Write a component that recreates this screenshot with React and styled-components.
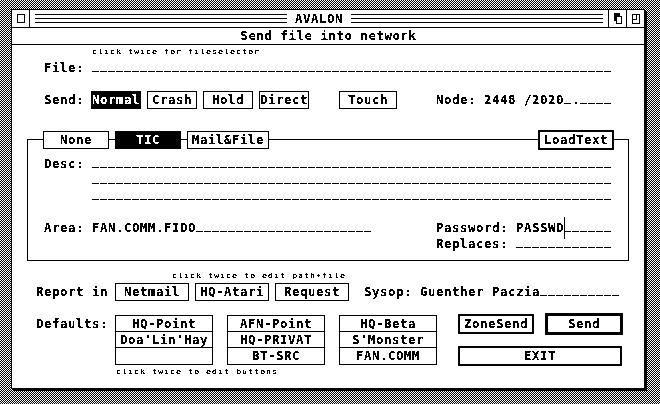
import React from "react";
import styled, { createGlobalStyle, css } from "styled-components";

const Global = createGlobalStyle`
  *, *::before, *::after { box-sizing: border-box; }
  html, body, #root { margin: 0; height: 100%; }
  body { overflow: hidden; }
`;

/* One text cell is 8 x 16 pixels. */
const cells = (n) => `${n * 8}px`;

const Desktop = styled.div`
  width: 660px;
  height: 404px;
  padding: 9px 0 0 11px;
  background: repeating-conic-gradient(#000 0 25%, #fff 0 50%) 0 0 / 2px 2px;
  color: #000;
  font: bold 12.4px/16px "DejaVu Sans Mono", monospace;
  letter-spacing: 0.535px;
  white-space: pre;
`;

const Window = styled.main`
  display: flex;
  flex-direction: column;
  width: 634px;
  height: 380px;
  background: #fff;
  border: 1px solid #000;
  box-shadow: 1px 1px 0 #000, 2px 2px 0 #000;
`;

const TitleBar = styled.header`
  display: flex;
  height: 18px;
  border-bottom: 1px solid #000;
`;

const Gadget = styled.button`
  display: flex;
  width: 18px;
  height: 17px;
  padding: 0;
  border: 0 solid #000;
  border-left-width: ${(p) => (p.$side === "right" ? "1px" : 0)};
  border-right-width: ${(p) => (p.$side === "left" ? "1px" : 0)};
  background: #fff;
  svg { display: block; width: 17px; height: 17px; flex: none; }
`;

const Stripes = styled.div`
  flex: none;
  width: 252px;
  height: 9px;
  margin: 4px ${(p) => (p.$end ? "5px" : "0")} 0 ${(p) => (p.$end ? "0" : "5px")};
  background: repeating-linear-gradient(#000 0 1px, #fff 1px 4px);
`;

const Crisp = css`
  filter: url(#onebit);
`;

const Text = styled.span`
  display: block;
  flex: none;
  height: 16px;
  width: ${(p) => (p.$w ? cells(p.$w) : "auto")};
  ${Crisp}
`;

const Title = styled.h1`
  flex: 1;
  margin: 1px 0 0;
  font: inherit;
  text-align: center;
  ${Crisp}
`;

const InfoLine = styled.div`
  display: flex;
  justify-content: center;
  height: 17px;
  padding-left: 1px;
  border-bottom: 1px solid #000;
`;

const Body = styled.div`
  display: flex;
  flex-direction: column;
  flex: 1;
`;

const Hint = styled.div`
  flex: none;
  align-self: flex-start;
  height: 14px;
  margin: ${(p) => p.$margin};
  font: normal 7px/14px "DejaVu Sans Mono", monospace;
  letter-spacing: 0.786px;
  transform: scaleX(1.2);
  transform-origin: 0 0;
  filter: url(#onebit-small);
`;

const Row = styled.div`
  display: flex;
  align-items: flex-start;
  height: 16px;
  margin: ${(p) => p.$margin || 0};
`;

const Blank = styled.span`
  display: block;
  flex: none;
  width: ${(p) => cells(p.$n)};
  height: 16px;
  background: repeating-linear-gradient(90deg, #000 0 7px, transparent 7px 8px) 0 11px / 100% 1px no-repeat;
`;

const Button = styled.button`
  display: flex;
  flex: none;
  align-items: center;
  justify-content: center;
  width: ${(p) => p.$w}px;
  height: ${(p) => 16 + 2 * (p.$b || 1)}px;
  margin: -${(p) => p.$b || 1}px ${(p) => p.$gap || 0}px 0 0;
  padding: 0;
  border: ${(p) => p.$b || 1}px solid #000;
  border-radius: 0;
  background: ${(p) => (p.$on ? "#000" : "#fff")};
  color: ${(p) => (p.$on ? "#fff" : "#000")};
  font: inherit;
  letter-spacing: inherit;
  white-space: pre;
`;

const Spacer = styled.span`
  flex: none;
  width: ${(p) => p.$w}px;
`;

const Group = styled.section`
  width: 602px;
  height: 122px;
  margin: 31px 0 0 15px;
  border: 1px solid #000;
`;

const Caret = styled.span`
  width: 1px;
  height: 22px;
  margin: -3px -1px 0 0;
  background: #000;
  z-index: 1;
`;

const Columns = styled.div`
  display: flex;
  height: 50px;
  margin: 15px 0 0 24px;
`;

const PresetList = styled.div`
  display: grid;
  flex: none;
  grid-template-rows: 16px 16px 16px;
  width: 98px;
  height: 50px;
  margin-right: 14px;
  border: 1px solid #000;
`;

const Preset = styled.button`
  display: flex;
  justify-content: center;
  padding: 0;
  border: 0 solid #000;
  border-bottom-width: 1px;
  background: transparent;
  color: #000;
  font: inherit;
  letter-spacing: inherit;
  &:last-child { border-bottom-width: 0; }
`;

const Actions = styled.div`
  display: flex;
  flex-wrap: wrap;
  align-content: flex-start;
  row-gap: 13px;
  width: 165px;
  margin: 1px 0 0 7px;
`;

const Field = ({ value = "", blanks }) => (
  <>
    {value && <Text $w={value.length}>{value}</Text>}
    <Blank $n={blanks} />
  </>
);

const Push = ({ children, ...rest }) => (
  <Button type="button" {...rest}>
    <Text>{children}</Text>
  </Button>
);

const PRESETS = [
  ["HQ-Point", "Doa'Lin'Hay", ""],
  ["AFN-Point", "HQ-PRIVAT", "BT-SRC"],
  ["HQ-Beta", "S'Monster", "FAN.COMM"],
];

const FilterDefs = styled.svg`
  position: absolute;
`;

const OneBitFilters = () => (
  <FilterDefs width="0" height="0" aria-hidden="true">
    <filter id="onebit" x="0" y="0" width="100%" height="100%" colorInterpolationFilters="sRGB">
      <feComponentTransfer>
        <feFuncA type="discrete" tableValues="0 0 0 1 1 1 1" />
      </feComponentTransfer>
    </filter>
    <filter id="onebit-small" x="0" y="0" width="100%" height="100%" colorInterpolationFilters="sRGB">
      <feComponentTransfer>
        <feFuncA type="discrete" tableValues="0 0 0 1 1 1 1 1" />
      </feComponentTransfer>
    </filter>
  </FilterDefs>
);

export default function App() {
  return (
    <>
      <Global />
      <OneBitFilters />
      <Desktop>
        <Window>
          <TitleBar>
            <Gadget $side="left" aria-label="Close">
              <svg viewBox="0 0 17 17" shapeRendering="crispEdges">
                <path d="M5.5 4.5h7v8h-7z" fill="none" stroke="#000" />
              </svg>
            </Gadget>
            <Stripes />
            <Title>AVALON</Title>
            <Stripes $end />
            <Gadget $side="right" aria-label="Cycle">
              <svg viewBox="0 0 17 17" shapeRendering="crispEdges">
                <path d="M5 3h6v8H5z" />
                <path d="M7.5 6.5h5v7h-5z" fill="#fff" stroke="#000" />
              </svg>
            </Gadget>
            <Gadget $side="right" aria-label="Full size">
              <svg viewBox="0 0 17 17" shapeRendering="crispEdges">
                <path d="M5.5 4.5h7v9h-7zM5.5 9.5h4v-5" fill="none" stroke="#000" />
              </svg>
            </Gadget>
          </TitleBar>
          <InfoLine>
            <Text $w={22}>Send file into network</Text>
          </InfoLine>
          <Body>
            <Hint $margin="0 0 0 80px">click twice for fileselector</Hint>
            <Row $margin="1px 0 0 32px">
              <Text $w={6}>File:</Text>
              <Field blanks={65} />
            </Row>
            <Row $margin="16px 0 0 32px">
              <Text $w={5}>Send:</Text>
              <Spacer $w={7} />
              <Push $w={50} $gap={6} $on>Normal</Push>
              <Push $w={50} $gap={6}>Crash</Push>
              <Push $w={50} $gap={6}>Hold</Push>
              <Push $w={50} $gap={30}>Direct</Push>
              <Push $w={58} $gap={39}>Touch</Push>
              <Text $w={6}>Node:</Text>
              <Field value="2448 /2020" blanks={1} />
              <Text $w={1}>.</Text>
              <Blank $n={4} />
            </Row>
            <Group>
              <Row $margin="-8px 0 0 15px">
                <Push $w={66} $gap={6}>None</Push>
                <Push $w={66} $gap={6} $on>TIC</Push>
                <Push $w={82} $gap={269}>Mail&File</Push>
                <Push $w={76} $b={2}>LoadText</Push>
              </Row>
              <Row $margin="8px 0 0 16px">
                <Text $w={6}>Desc:</Text>
                <Blank $n={65} />
              </Row>
              <Row $margin="0 0 0 64px"><Blank $n={65} /></Row>
              <Row $margin="0 0 0 64px"><Blank $n={65} /></Row>
              <Row $margin="16px 0 0 16px">
                <Text $w={6}>Area:</Text>
                <Field value="FAN.COMM.FIDO" blanks={22} />
                <Spacer $w={64} />
                <Text $w={10}>Password:</Text>
                <Text $w={6}>PASSWD</Text>
                <Caret />
                <Blank $n={6} />
              </Row>
              <Row $margin="0 0 0 408px">
                <Text $w={10}>Replaces:</Text>
                <Blank $n={12} />
              </Row>
            </Group>
            <Hint $margin="8px 0 0 160px">click twice to edit path+file</Hint>
            <Row $margin="1px 0 0 24px">
              <Text $w={9}>Report in</Text>
              <Spacer $w={7} />
              <Push $w={74} $gap={6}>Netmail</Push>
              <Push $w={74} $gap={6}>HQ-Atari</Push>
              <Push $w={74} $gap={15}>Request</Push>
              <Text $w={7}>Sysop:</Text>
              <Field value="Guenther Paczia" blanks={10} />
            </Row>
            <Columns>
              <Row $margin="1px 7px 0 0"><Text $w={9}>Defaults:</Text></Row>
              {PRESETS.map((names, i) => (
                <PresetList key={i}>
                  {names.map((name, j) => (
                    <Preset key={j} type="button"><Text>{name}</Text></Preset>
                  ))}
                </PresetList>
              ))}
              <Actions>
                <Push $w={76} $b={2} $gap={11}>ZoneSend</Push>
                <Push $w={78} $b={3}>Send</Push>
                <Push $w={164} $b={2}>EXIT</Push>
              </Actions>
            </Columns>
            <Hint $margin="0 0 0 104px">click twice to edit buttons</Hint>
          </Body>
        </Window>
      </Desktop>
    </>
  );
}
